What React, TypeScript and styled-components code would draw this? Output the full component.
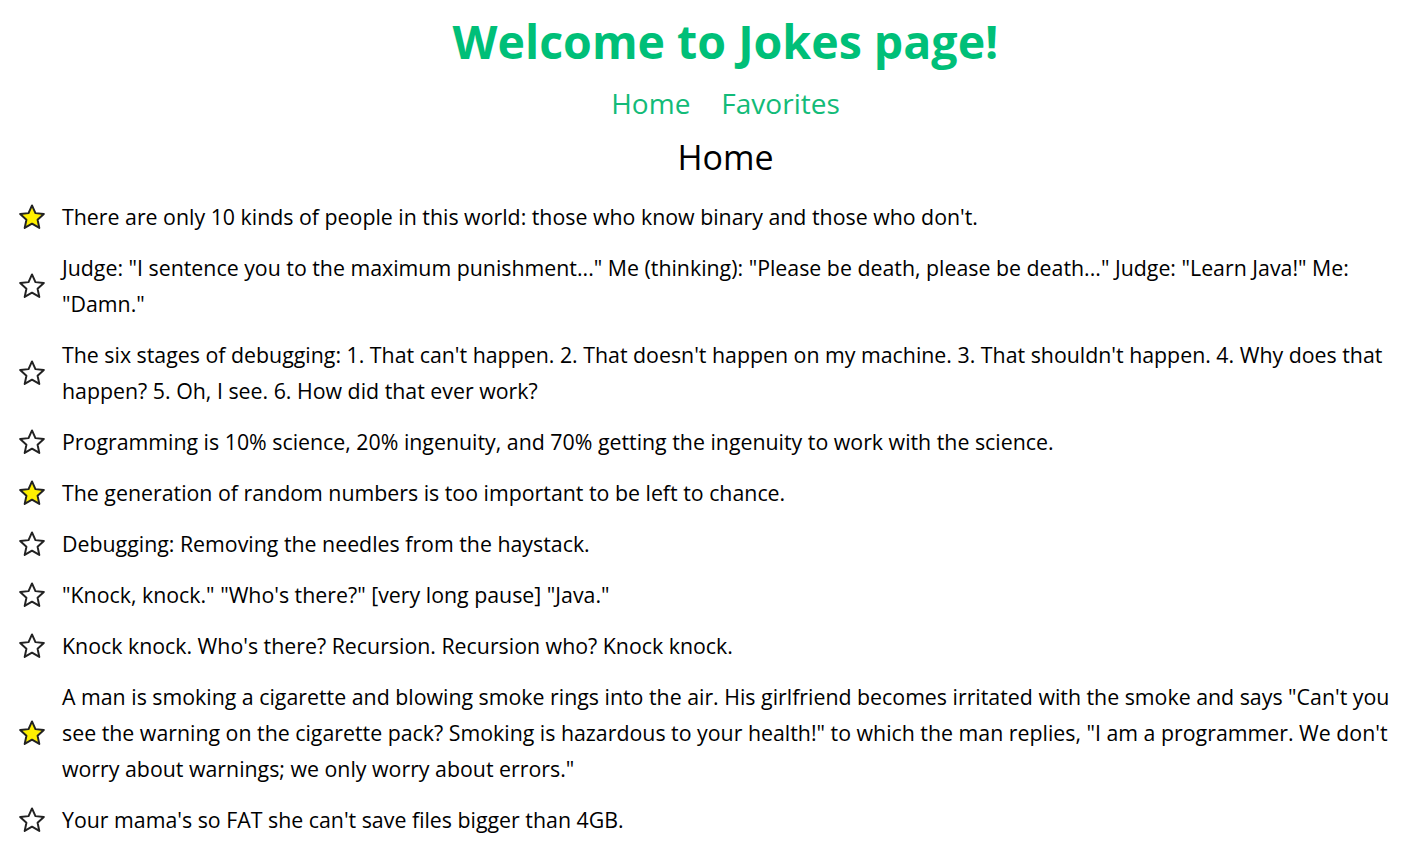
import React, { useState } from "react";
import styled, { createGlobalStyle } from "styled-components";

const GlobalStyle = createGlobalStyle`
  html, body { margin: 0; padding: 0; background: #ffffff; }
  body { font-family: 'Open Sans', 'Noto Sans', sans-serif; color: #000; }
`;

const Page = styled.div`
  display: flex;
  flex-direction: column;
  align-items: stretch;
  padding: 12px 15px 20px 19px;
`;

const Header = styled.header`
  display: flex;
  flex-direction: column;
  align-items: center;
  padding-left: 12px;
  margin-right: -15px;
`;

const Title = styled.h1`
  margin: 0;
  text-align: center;
  font-size: 46.5px;
  line-height: 58px;
  font-weight: 700;
  color: #00bf78;
`;

const Nav = styled.nav`
  margin-top: 14px;
  display: flex;
  justify-content: center;
  gap: 31px;
`;

const NavLink = styled.a`
  font-size: 28px;
  line-height: 38px;
  color: #12bb78;
  text-decoration: none;
  cursor: pointer;
`;

const Heading = styled.h2`
  margin: 13px 0 0;
  text-align: center;
  font-size: 34px;
  line-height: 44px;
  font-weight: 400;
  color: #000;
`;

const List = styled.ul`
  list-style: none;
  margin: 20px 0 0;
  padding: 0;
  display: flex;
  flex-direction: column;
  gap: 15px;
`;

const Item = styled.li`
  display: flex;
  align-items: center;
  gap: 17px;
`;

const StarButton = styled.button`
  flex: 0 0 26px;
  width: 26px;
  height: 26px;
  padding: 0;
  border: none;
  background: none;
  cursor: pointer;
  display: flex;
  svg { display: block; overflow: visible; }
`;

const JokeText = styled.span`
  font-size: 21.33px;
  line-height: 36px;
  color: #000;
`;

const Star: React.FC<{ filled: boolean }> = ({ filled }) => (
  <svg width="26" height="26" viewBox="0 0 24 24">
    <path
      d="M12 1.3L15.18 8.43L22.94 9.25L17.14 14.47L18.76 22.1L12 18.2L5.24 22.1L6.86 14.47L1.06 9.25L8.82 8.43Z"
      fill={filled ? "#fff000" : "#ffffff"}
      stroke="#222"
      strokeWidth="1.8"
      strokeLinejoin="round"
    />
  </svg>
);

const jokes: { text: string; fav: boolean }[] = [
  { text: "There are only 10 kinds of people in this world: those who know binary and those who don't.", fav: true },
  { text: "Judge: \"I sentence you to the maximum punishment...\" Me (thinking): \"Please be death, please be death...\" Judge: \"Learn Java!\" Me: \"Damn.\"", fav: false },
  { text: "The six stages of debugging: 1. That can't happen. 2. That doesn't happen on my machine. 3. That shouldn't happen. 4. Why does that happen? 5. Oh, I see. 6. How did that ever work?", fav: false },
  { text: "Programming is 10% science, 20% ingenuity, and 70% getting the ingenuity to work with the science.", fav: false },
  { text: "The generation of random numbers is too important to be left to chance.", fav: true },
  { text: "Debugging: Removing the needles from the haystack.", fav: false },
  { text: "\"Knock, knock.\" \"Who's there?\" [very long pause] \"Java.\"", fav: false },
  { text: "Knock knock. Who's there? Recursion. Recursion who? Knock knock.", fav: false },
  { text: "A man is smoking a cigarette and blowing smoke rings into the air. His girlfriend becomes irritated with the smoke and says \"Can't you see the warning on the cigarette pack? Smoking is hazardous to your health!\" to which the man replies, \"I am a programmer. We don't worry about warnings; we only worry about errors.\"", fav: true },
  { text: "Your mama's so FAT she can't save files bigger than 4GB.", fav: false },
];

export default function App() {
  const [favs, setFavs] = useState<boolean[]>(jokes.map((j) => j.fav));
  return (
    <>
      <GlobalStyle />
      <Page>
        <Header>
          <Title>Welcome to Jokes page!</Title>
          <Nav>
            <NavLink>Home</NavLink>
            <NavLink>Favorites</NavLink>
          </Nav>
          <Heading>Home</Heading>
        </Header>
        <List>
          {jokes.map((j, i) => (
            <Item key={i}>
              <StarButton
                aria-label="toggle favorite"
                onClick={() => setFavs((f) => f.map((v, k) => (k === i ? !v : v)))}
              >
                <Star filled={favs[i]} />
              </StarButton>
              <JokeText>{j.text}</JokeText>
            </Item>
          ))}
        </List>
      </Page>
    </>
  );
}
